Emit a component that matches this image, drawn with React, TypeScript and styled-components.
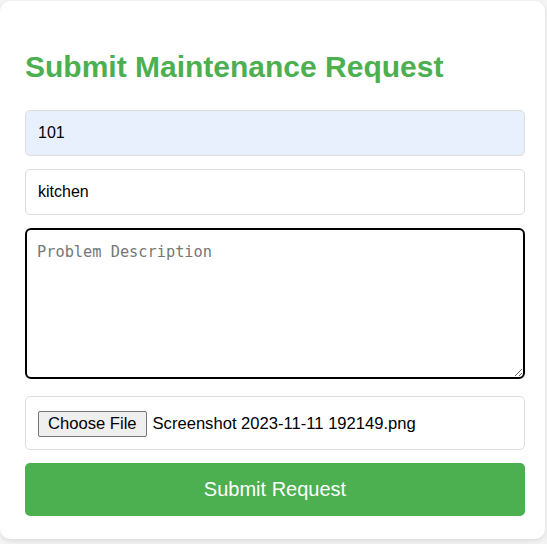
import React, { useState } from "react";
import styled, { createGlobalStyle } from "styled-components";

const GlobalStyle = createGlobalStyle`
  body {
    margin: 0;
    background: #f4f4f4;
    font-family: "Liberation Sans", Arial, sans-serif;
  }
`;

const Card = styled.form`
  box-sizing: border-box;
  width: 545px;
  margin: 1px 0 6px 0;
  padding: 25px 20px 23px 25px;
  background: #ffffff;
  border-radius: 10px;
  box-shadow: 0 2px 5px rgba(0, 0, 0, 0.1);
  display: flex;
  flex-direction: column;
`;

const Heading = styled.h2`
  margin: 24px 0 26px;
  color: #4caf50;
  font-size: 30px;
  font-weight: bold;
  line-height: 34px;
`;

const Fields = styled.div`
  display: flex;
  flex-direction: column;
  gap: 13px;
`;

const TextInput = styled.input<{ $filled?: boolean }>`
  box-sizing: border-box;
  width: 100%;
  height: 46px;
  padding: 0 12px;
  border: 1px solid #ddd;
  border-radius: 5px;
  background: ${({ $filled }) => ($filled ? "#e8f0fe" : "#ffffff")};
  font-family: "Liberation Sans", Arial, sans-serif;
  font-size: 16px;
  color: #000;
  outline: none;
`;

const TextArea = styled.textarea`
  box-sizing: border-box;
  width: 100%;
  height: 151px;
  margin: 0 0 4px;
  padding: 13px 10px 11px;
  border: 2px solid #000;
  border-radius: 6px;
  font-family: "DejaVu Sans Mono", "Liberation Mono", monospace;
  font-size: 15.3px;
  outline: none;
  resize: both;

  &::placeholder {
    color: #777;
  }
`;

const FileBox = styled.label`
  box-sizing: border-box;
  display: flex;
  align-items: center;
  gap: 6px;
  height: 54px;
  padding: 1px 12px 0 12px;
  border: 1px solid #ddd;
  border-radius: 5px;
  font-size: 16.6px;
  color: #000;
  cursor: pointer;
`;

const HiddenFile = styled.input`
  display: none;
`;

const FakeButton = styled.span`
  box-sizing: border-box;
  height: 26px;
  padding: 0 9px;
  display: inline-flex;
  align-items: center;
  background: #efefef;
  border: 1px solid #767676;
  border-radius: 2px;
`;

const SubmitButton = styled.button`
  height: 53px;
  border: none;
  border-radius: 5px;
  background: #4caf50;
  color: #ffffff;
  font-family: "Liberation Sans", Arial, sans-serif;
  font-size: 20px;
  cursor: pointer;
`;

export default function App() {
  const [unit, setUnit] = useState("101");
  const [room, setRoom] = useState("kitchen");
  const [desc, setDesc] = useState("");
  const [fileName, setFileName] = useState("Screenshot 2023-11-11 192149.png");

  return (
    <>
      <GlobalStyle />
      <Card onSubmit={(e) => e.preventDefault()}>
        <Heading>Submit Maintenance Request</Heading>
        <Fields>
          <TextInput
            $filled
            value={unit}
            onChange={(e) => setUnit(e.target.value)}
            placeholder="Apartment Number"
          />
          <TextInput
            value={room}
            onChange={(e) => setRoom(e.target.value)}
            placeholder="Area"
          />
          <TextArea
            value={desc}
            onChange={(e) => setDesc(e.target.value)}
            placeholder="Problem Description"
          />
          <FileBox>
            <HiddenFile
              type="file"
              onChange={(e) => {
                const f = e.target.files?.[0];
                if (f) setFileName(f.name);
              }}
            />
            <FakeButton>Choose File</FakeButton>
            <span>{fileName}</span>
          </FileBox>
          <SubmitButton type="submit">Submit Request</SubmitButton>
        </Fields>
      </Card>
    </>
  );
}
